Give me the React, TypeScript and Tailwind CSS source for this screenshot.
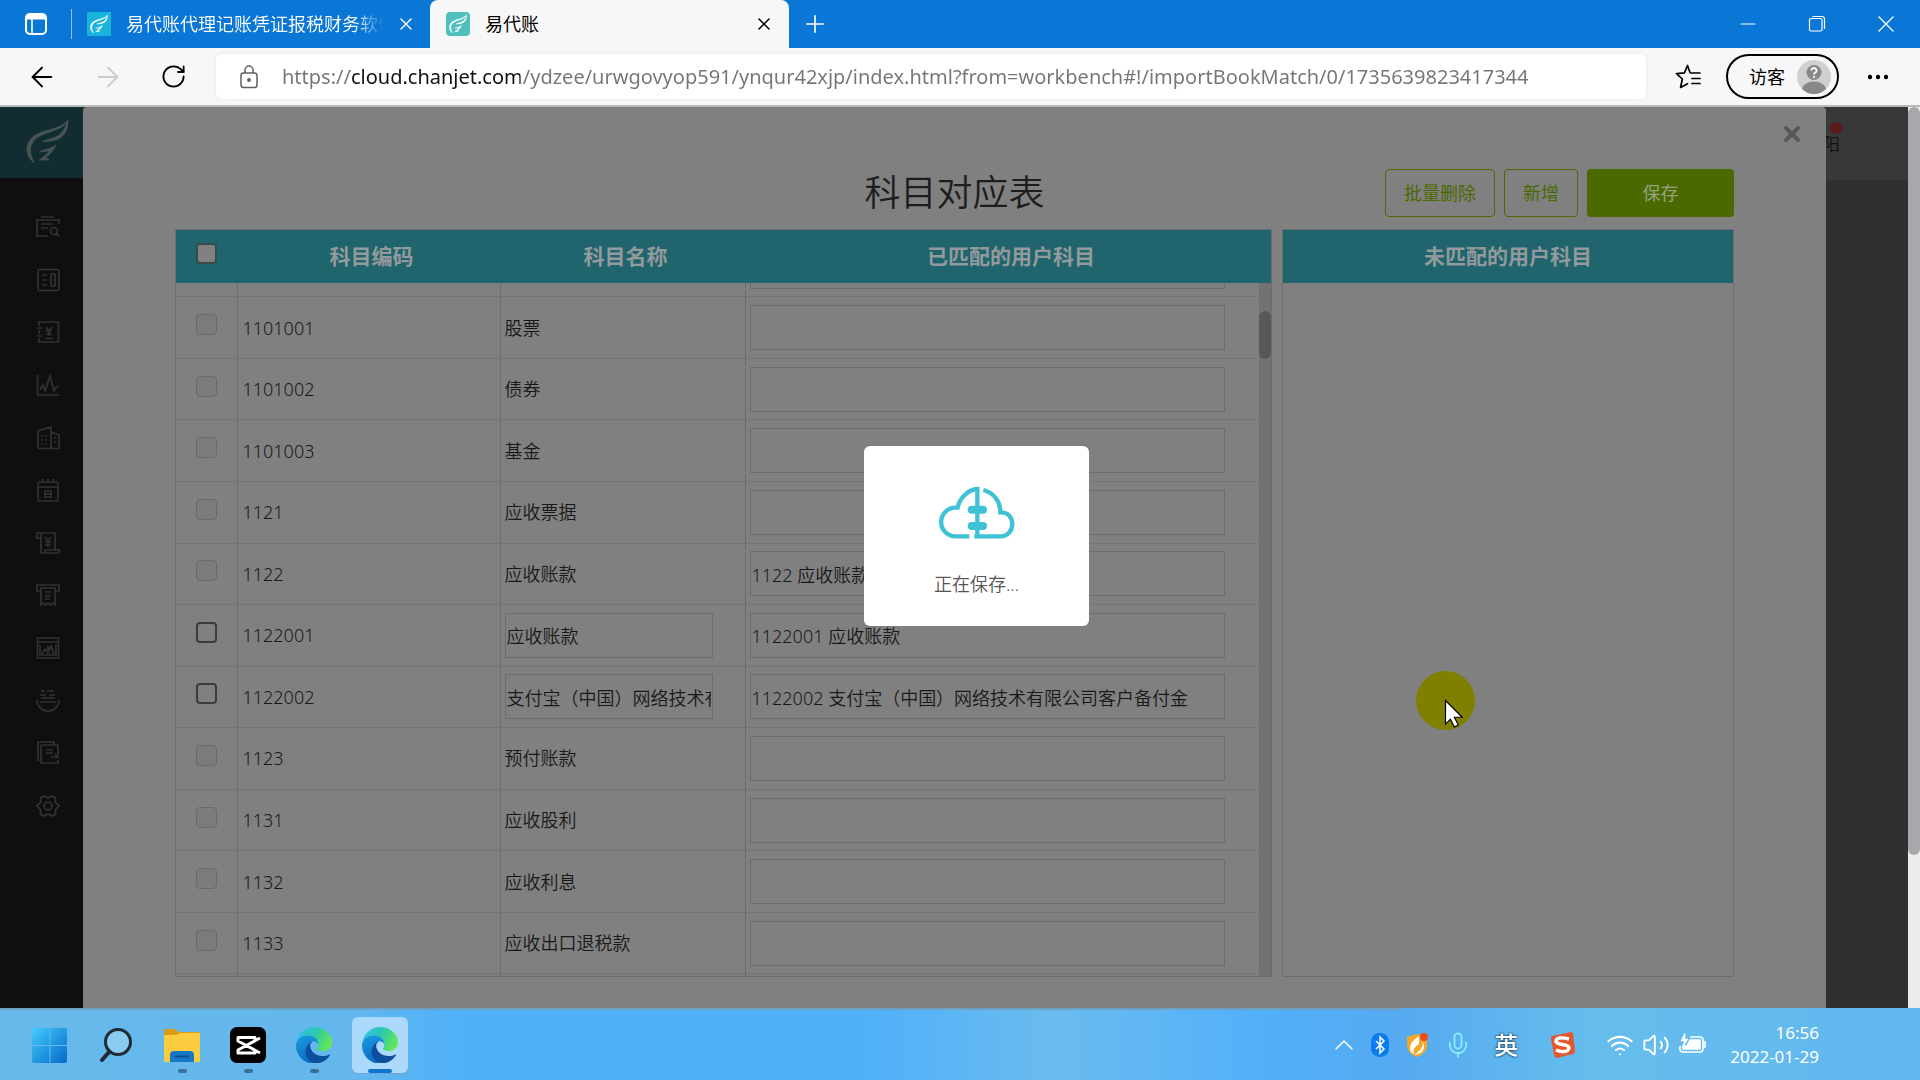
import type { ReactNode } from 'react'
import { ArrowLeft, ArrowRight, ChevronUp, Mic, Minus, Plus, RotateCw, Volume2, Wifi, X } from 'lucide-react'

type Row = { code: string; name: string; matched: string; editable?: boolean }

const rows: Row[] = [
  { code: '', name: '', matched: '' },
  { code: '1101001', name: '股票', matched: '' },
  { code: '1101002', name: '债券', matched: '' },
  { code: '1101003', name: '基金', matched: '' },
  { code: '1121', name: '应收票据', matched: '' },
  { code: '1122', name: '应收账款', matched: '1122 应收账款' },
  { code: '1122001', name: '应收账款', matched: '1122001 应收账款', editable: true },
  {
    code: '1122002',
    name: '支付宝（中国）网络技术有限公司客户备付金',
    matched: '1122002 支付宝（中国）网络技术有限公司客户备付金',
    editable: true,
  },
  { code: '1123', name: '预付账款', matched: '' },
  { code: '1131', name: '应收股利', matched: '' },
  { code: '1132', name: '应收利息', matched: '' },
  { code: '1133', name: '应收出口退税款', matched: '' },
  { code: '', name: '', matched: '' },
]

function Feather({ className }: { className: string }) {
  return (
    <svg className={className} viewBox="78 60 130 132" fill="currentColor" stroke="currentColor" strokeWidth="3">
      <path d="M205 62C196 84 160 92 130 104C96 118 76 146 103 192C76 172 72 138 96 114C124 88 182 92 205 62Z" />
      <path d="M205 62C206 90 196 110 172 120C156 126 140 125 128 126C150 118 172 114 184 102C196 90 200 78 205 62Z" />
      <path d="M168 138C160 156 148 168 136 176L148 182L118 183C130 174 144 164 150 154L118 158C138 150 154 148 168 138Z" />
    </svg>
  )
}

function TabsIcon() {
  return (
    <svg className="size-6" viewBox="0 0 24 24" fill="none" stroke="white" strokeWidth="2">
      <rect x="2" y="2" width="20" height="20" rx="4" />
      <path d="M2 5h20" strokeWidth="5" />
      <path d="M8 7v15" strokeWidth="1.6" />
    </svg>
  )
}

function EdgeIcon({ id }: { id: string }) {
  return (
    <svg className="size-9" viewBox="0 0 256 256">
      <defs>
        <linearGradient id={id + 'a'} x1="0" y1="0.3" x2="1" y2="0.6">
          <stop offset="0" stopColor="#35c1f1" />
          <stop offset="0.5" stopColor="#2cc7ad" />
          <stop offset="1" stopColor="#66eb4e" />
        </linearGradient>
        <linearGradient id={id + 'b'} x1="0" y1="0" x2="0.3" y2="1">
          <stop offset="0" stopColor="#1b9de2" />
          <stop offset="1" stopColor="#0a6cc4" />
        </linearGradient>
      </defs>
      <path fill="#0c4f9c" d="M235.7 195.5a93.7 93.7 0 0 1-10.6 4.7 101.9 101.9 0 0 1-35.9 6.4c-47.3 0-88.5-32.5-88.5-74.3a31.5 31.5 0 0 1 16.4-27.3c-42.8 1.8-53.8 46.4-53.8 72.5 0 74 68.1 81.4 82.8 81.4 7.9 0 19.8-2.3 27-4.6l1.3-.4a128.3 128.3 0 0 0 66.6-52.8 4 4 0 0 0-5.3-5.6z" />
      <path fill={`url(#${id}b)`} d="M105.7 246.4a79.2 79.2 0 0 1-22.7-21.3 80.7 80.7 0 0 1 29.5-120c3.2-1.5 8.5-4.1 15.6-4a32.4 32.4 0 0 1 25.7 13 31.9 31.9 0 0 1 6.3 18.7c0-.2 24.5-79.6-80-79.6-43.9 0-80 41.6-80 78.2a130.2 130.2 0 0 0 12.1 56 128 128 0 0 0 156.4 67 75.5 75.5 0 0 1-62.8-8z" />
      <path fill={`url(#${id}a)`} d="M152.3 148.9c-.9 1-3.4 2.5-3.4 5.6 0 2.6 1.7 5.2 4.8 7.3 14.3 10 41.4 8.6 41.5 8.6a59.6 59.6 0 0 0 30.3-8.3 61.4 61.4 0 0 0 30.4-52.9c.3-22.4-8-37.3-11.3-43.9C223.5 23.9 177.7 0 128 0A128 128 0 0 0 0 126.2c.5-36.5 36.8-66 80-66 3.5 0 23.5.3 42 10a72.6 72.6 0 0 1 30.9 29.3c6.1 10.6 7.2 24.1 7.2 29.5s-2.7 13.3-7.8 19.9z" />
    </svg>
  )
}

function TabBar() {
  return (
    <div className="flex h-12 shrink-0 items-center bg-[#0a76d6] text-white">
      <button aria-label="标签页操作" className="ml-6">
        <TabsIcon />
      </button>
      <div className="ml-[23px] h-[30px] w-px bg-[#8fc3ef]" />
      <div className="flex h-12 w-[358px] items-center pl-[15px]">
        <div className="flex size-6 shrink-0 items-center justify-center bg-[#19b4dc]">
          <Feather className="size-[18px] text-white" />
        </div>
        <span className="ml-[15px] w-[258px] overflow-hidden whitespace-nowrap bg-[linear-gradient(90deg,white_88%,transparent)] bg-clip-text text-lg text-transparent">
          易代账代理记账凭证报税财务软件
        </span>
        <button aria-label="关闭标签页" className="ml-3">
          <X className="size-5" strokeWidth={1.6} />
        </button>
      </div>
      <div className="flex h-12 w-[359px] items-center rounded-t-lg bg-[#f7f7f7] pl-4 pr-[15px] text-black">
        <div className="flex size-6 items-center justify-center rounded-sm bg-[#4fc0bd]">
          <Feather className="size-[18px] text-white" />
        </div>
        <span className="ml-[15px] flex-1 text-lg">易代账</span>
        <button aria-label="关闭标签页">
          <X className="size-5" strokeWidth={1.8} />
        </button>
      </div>
      <button aria-label="新建标签页" className="ml-3">
        <Plus className="size-7" strokeWidth={1.4} />
      </button>
      <div className="ml-auto flex items-center gap-[45px] pr-[22px]">
        <button aria-label="最小化">
          <Minus className="size-6" strokeWidth={1.2} />
        </button>
        <button aria-label="还原">
          <svg className="size-6" viewBox="0 0 24 24" fill="none" stroke="currentColor" strokeWidth="1.2">
            <rect x="4.5" y="6.5" width="12.5" height="12.5" rx="1.5" />
            <path d="M7.5 4.5h9.500a2.500 2.500 0 0 1 2.500 2.500v10" />
          </svg>
        </button>
        <button aria-label="关闭窗口">
          <svg className="size-6" viewBox="0 0 24 24" stroke="currentColor" strokeWidth="1.3">
            <path d="M4.500 4.500l15 15M19.500 4.500l-15 15" />
          </svg>
        </button>
      </div>
    </div>
  )
}

function Toolbar() {
  return (
    <div className="flex h-[59px] shrink-0 items-center border-b-2 border-[#b9b9b9] bg-[#f7f7f7] text-black">
      <button aria-label="后退" className="ml-[26px]">
        <ArrowLeft className="size-8" strokeWidth={1.5} />
      </button>
      <button aria-label="前进" className="ml-[34px] text-[#cccccc]" disabled>
        <ArrowRight className="size-8" strokeWidth={1.5} />
      </button>
      <button aria-label="刷新" className="ml-9">
        <RotateCw className="size-[27px]" strokeWidth={1.6} />
      </button>
      <div className="ml-[29px] flex h-[45px] flex-1 items-center rounded-md bg-white pl-6 shadow-[0_0_4px_#e8e8e8]">
        <svg className="h-6 w-[18px]" viewBox="0 0 18 24" fill="none" stroke="#5f5f5f" strokeWidth="1.5">
          <rect x="1" y="8" width="16" height="14.5" rx="2.5" />
          <path d="M5 8V5a4 4 0 0 1 8 0v3" />
          <circle cx="9" cy="15" r="1.2" fill="#5f5f5f" />
        </svg>
        <input
          aria-label="地址栏"
          readOnly
          className="ml-6 min-w-0 flex-1 bg-[linear-gradient(90deg,#757575_68px,#111111_68px,#111111_238px,#757575_238px)] bg-clip-text text-[20px] text-transparent outline-none"
          defaultValue="https://cloud.chanjet.com/ydzee/urwgovyop591/ynqur42xjp/index.html?from=workbench#!/importBookMatch/0/1735639823417344"
        />
      </div>
      <button aria-label="收藏夹" className="ml-[29px]">
        <svg className="size-[27px]" viewBox="0 0 27 27" fill="none" stroke="black" strokeWidth="1.7" strokeLinejoin="round" strokeLinecap="round">
          <path d="M15 9.500L12.500 2.500L9.500 9.800L1.500 10.600L7.300 16L5.600 24.500L12.500 20.700" />
          <path d="M16 10h9M17 15.500h8M17 20.500h8" />
        </svg>
      </button>
      <button className="ml-6 flex h-[45px] w-[113px] items-center rounded-full border-2 border-black pl-[21px] text-lg">
        访客
        <svg className="ml-3 size-[34px]" viewBox="0 0 34 34">
          <defs>
            <clipPath id="avatar">
              <circle cx="17" cy="17" r="17" />
            </clipPath>
          </defs>
          <g clipPath="url(#avatar)">
            <rect width="34" height="34" fill="#d2d0ce" />
            <circle cx="17" cy="12.5" r="7.5" fill="#8a8886" />
            <ellipse cx="17" cy="30" rx="12" ry="8.5" fill="#8a8886" />
          </g>
          <path d="M14.500 10.500a2.500 2.500 0 1 1 3.500 2.300q-1 .5-1 1.700" fill="none" stroke="white" strokeWidth="1.8" />
          <circle cx="17" cy="17" r="1.1" fill="white" />
        </svg>
      </button>
      <button aria-label="更多" className="ml-7 mr-[31px]">
        <svg className="h-2 w-[22px]" viewBox="0 0 22 8">
          <circle cx="3" cy="4" r="2.2" />
          <circle cx="11" cy="4" r="2.2" />
          <circle cx="19" cy="4" r="2.2" />
        </svg>
      </button>
    </div>
  )
}

const sideIcons: { label: string; art: ReactNode }[] = [
  {
    label: '查凭证',
    art: <path d="M5 2h13M1 10V5h22v4M1 5v16h11M5 9h12M5 13h7M21.500 16a3.500 3.500 0 1 1-7 0a3.500 3.500 0 1 1 7 0M20.500 18.500L23 21.500" />,
  },
  { label: '账簿', art: <path d="M3.500 1.500h18a1.500 1.500 0 0 1 1.500 1.500v18a1.500 1.500 0 0 1-1.500 1.500h-18a1.500 1.500 0 0 1-1.500-1.500v-18a1.500 1.500 0 0 1 1.500-1.500M6 7h5M6 12h5M6 17h5M15 6h4v12h-4z" /> },
  { label: '资金', art: <path d="M3 6V2h18.500a1 1 0 0 1 1 1v18a1 1 0 0 1-1 1H3v-4M3 10v4M1 8h5M1 16h5M10 7l3 4l3-4M13 11v5M10 11h6M10 14h6M9 18.500h8" /> },
  { label: '报表', art: <path d="M1.500 2v20H23M4 17l3-5l2 6l5-15l4 15l2-4h3" /> },
  { label: '资产', art: <path d="M2 22V5l13-4v21M2 22.500h21V9l-8-3M5 10h2M9 10h2M5 14h2M9 14h2M5 18h2M9 18h2M18 12h2M18 16h2" /> },
  { label: '结账', art: <path d="M3 4h18a1 1 0 0 1 1 1v17a1 1 0 0 1-1 1H3a1 1 0 0 1-1-1V5a1 1 0 0 1 1-1M2 9h20M7 1v4M12 1v4M17 1v4M9 13h6v6H9zM9 16h6" /> },
  { label: '工资', art: <path d="M5 7H1V2h18v17M5 2v20M5 22h17a2 2 0 0 0 1-3H9v3M9 6l3 4l3-4M12 10v6M9 11h6M9 14h6" /> },
  { label: '发票', art: <path d="M5 8H1V2h22v6h-4M5 5h14v17l-3-2l-2 2l-2-2l-2 2l-2-2l-3 2zM9 9h6M9 13h6M9 16h5" /> },
  { label: '税务', art: <path d="M1.500 2h21v20h-21zM1.500 6h21M4 9v10h16V9M6 18l3-5l3 3l3-6l3 8M12 10v8" /> },
  { label: '备份', art: <path d="M1 11a11 11 0 0 0 22 0M5 2h4M11 2h7M4 6h6M13 6h6M5 9h14M4 13h16" /> },
  { label: '单据', art: <path d="M5 19H2V1h16v3M5 4h17v10M5 4v18h17v-3M10 9h7M10 12h7M15 16h7l-3-3" /> },
  {
    label: '设置',
    art: (
      <>
        <path d="M8 2l4 2l4-2l3.500 2v4.500L23 12l-3.500 3.500V20L16 22l-4-2l-4 2l-3.500-2v-4.500L1 12l3.500-3.500V4z" />
        <circle cx="12" cy="12" r="4" />
      </>
    ),
  },
]

function Sidebar() {
  return (
    <nav className="w-[83px] shrink-0 bg-[#0f0f11]">
      <a href="#home" aria-label="首页" className="flex h-[71px] bg-[#112d31] pl-[26px] pt-[13px]">
        <Feather className="size-[43px] text-[#4a5354]" />
      </a>
      <div className="mt-[37px] flex h-[603px] flex-col justify-between pl-9">
        {sideIcons.map((icon) => (
          <a key={icon.label} href="#menu" aria-label={icon.label} className="size-6">
            <svg className="size-6" viewBox="0 0 24 24" fill="none" stroke="#323235" strokeWidth="1.7">
              {icon.art}
            </svg>
          </a>
        ))}
      </div>
    </nav>
  )
}

function Columns() {
  return (
    <colgroup>
      <col className="w-[61px]" />
      <col className="w-[263px]" />
      <col className="w-[245px]" />
      <col />
    </colgroup>
  )
}

function SubjectTable() {
  return (
    <section className="flex min-h-0 flex-col border border-[#6d6d6d]">
      <table className="w-full table-fixed bg-[#20646d] text-[21px] text-[#939a9b]">
        <Columns />
        <thead>
          <tr className="h-[53px]">
            <th className="pb-[6px]">
              <input type="checkbox" aria-label="全选" className="mx-auto block size-[21px] appearance-none rounded border-2 border-[#3b4a4c] bg-[#808080]" />
            </th>
            <th className="pl-[6px]">科目编码</th>
            <th className="pl-[6px]">科目名称</th>
            <th className="pl-[6px]">已匹配的用户科目</th>
          </tr>
        </thead>
      </table>
      <div className="flex min-h-0 flex-1 overflow-hidden">
        <div className="min-w-0 flex-1">
          <table className="-mt-[47px] h-[800px] w-full table-fixed text-lg font-[350] text-[#181818]">
            <Columns />
            <tbody>
              {rows.map((row, i) => (
                <tr key={i} className="border-b border-[#757575]">
                  <td className="border-r border-[#6d6d6d] pb-[6px]">
                    <input
                      type="checkbox"
                      aria-label={'选择 ' + row.code}
                      disabled={!row.editable}
                      className="mx-auto block size-[21px] appearance-none rounded border-2 border-[#3c3c3c] disabled:border disabled:border-[#6a6a6a] disabled:bg-[#7b7b7b]"
                    />
                  </td>
                  <td className="border-r border-[#6d6d6d] pl-[5px]">{row.code}</td>
                  <td className="border-r border-[#6d6d6d] pl-1 pr-8">
                    {row.editable ? (
                      <input aria-label="科目名称" defaultValue={row.name} className="block h-[45px] w-full border border-[#6d6d6d] px-px outline-none" />
                    ) : (
                      row.name
                    )}
                  </td>
                  <td className="pl-1 pr-[34px]">
                    <input aria-label="已匹配的用户科目" defaultValue={row.matched} className="block h-[45px] w-full border border-[#6d6d6d] px-px outline-none" />
                  </td>
                </tr>
              ))}
            </tbody>
          </table>
        </div>
        <div className="w-3 bg-[#727272] pt-7">
          <div className="h-12 rounded-full bg-[#585858]" />
        </div>
      </div>
    </section>
  )
}

function MatchDialog() {
  return (
    <main className="flex min-w-0 flex-1 flex-col rounded-t bg-[#808080] px-[92px] pb-[31px]">
      <div className="-mr-[72px] flex h-[62px] items-center justify-end">
        <button aria-label="关闭" className="mb-2 mr-[2px] text-[#575757]">
          <X className="size-6" strokeWidth={4} />
        </button>
      </div>
      <div className="grid h-12 grid-cols-[1fr_auto_1fr] items-center">
        <h1 className="col-start-2 text-4xl font-[350] text-[#1d1d1d]">科目对应表</h1>
        <div className="flex justify-end gap-[9px] text-lg">
          <button className="h-12 rounded border border-[#4a6a00] px-[18px] text-[#4a6a00]">批量删除</button>
          <button className="h-12 rounded border border-[#4a6a00] px-[18px] text-[#4a6a00]">新增</button>
          <button className="h-12 w-[147px] rounded bg-[#4a6a00] text-[#97a380]">保存</button>
        </div>
      </div>
      <div className="mt-3 grid min-h-0 flex-1 grid-cols-[1097fr_452fr] gap-[10px]">
        <SubjectTable />
        <section className="flex flex-col border border-[#6d6d6d]">
          <h2 className="flex h-[53px] items-center justify-center bg-[#20646d] text-[21px] font-bold text-[#939a9b]">未匹配的用户科目</h2>
        </section>
      </div>
    </main>
  )
}

function SavingPopup() {
  return (
    <div role="status" className="absolute left-[45%] top-[446px] flex h-[180px] w-[225px] flex-col items-center rounded-md bg-white pt-10">
      <svg className="h-[54px] w-[76px]" viewBox="0 0 228 162" fill="none" stroke="#3fc1d6" strokeWidth="13">
        <path d="M91 151H50a42 42 0 0 1-1-86h7C62 34 90 10 115 9V151" />
        <path d="M133 12c32 8 52 36 51 67c22-1 36 14 36 35c0 22-16 37-36 37H106" />
        <path d="M98 71h34M98 120h34" strokeWidth="24" strokeLinecap="round" />
      </svg>
      <p className="mt-[30px] text-lg font-[350] text-[#555555]">正在保存...</p>
    </div>
  )
}

function Pointer() {
  return (
    <svg className="pointer-events-none absolute left-[1416px] top-[671px] size-[59px]" viewBox="0 0 60 60">
      <circle cx="30" cy="30" r="30" fill="#808000" />
      <path d="M30 30v24l5-5l4 8l4-2l-4-8h8z" fill="white" stroke="black" strokeWidth="1.2" />
    </svg>
  )
}

function TaskButton({ label, running, active, children }: { label: string; running?: boolean; active?: boolean; children: ReactNode }) {
  return (
    <button
      aria-label={label}
      className={'flex h-14 w-14 flex-col items-center pt-[10px] ' + (active ? 'rounded-md bg-[#aad9fb] shadow-[0_1px_1px_#6fa9d4]' : '')}
    >
      {children}
      {active && <span className="mt-[6px] h-1 w-6 rounded-full bg-[#0f74cf]" />}
      {running && <span className="mt-[6px] h-1 w-[9px] rounded-full bg-[#3b7199]" />}
    </button>
  )
}

function Taskbar() {
  return (
    <footer className="h-[72px] shrink-0 bg-[linear-gradient(90deg,#67b9ea_0%,#63b7ec_18%,#50b0f9_24%,#50b0f9_45%,#6abcee_55%,#52affa_66%,#55aaf0_73%,#65bdec_83%,#61b7f0_100%)]">
      <div className="h-[2px] w-[73%] bg-[#6ea0c2]" />
      <div className="flex h-[70px] items-center pl-[22px] pr-[101px]">
        <div className="flex gap-[10px]">
          <TaskButton label="开始">
            <svg className="size-9" viewBox="0 0 36 36">
              <defs>
                <linearGradient id="win" x1="0" y1="0" x2="1" y2="1">
                  <stop offset="0" stopColor="#43cbfb" />
                  <stop offset="1" stopColor="#0569cb" />
                </linearGradient>
              </defs>
              <path fill="url(#win)" d="M2 1h15.500v17H0V3a2 2 0 0 1 2-2zM18.500 1H33a2 2 0 0 1 2 2v15H18.500zM0 19h17.500v17H2a2 2 0 0 1-2-2zM18.500 19H35v15a2 2 0 0 1-2 2H18.500z" />
            </svg>
          </TaskButton>
          <TaskButton label="搜索">
            <svg className="size-9" viewBox="0 0 36 36" fill="none" stroke="#1f2a33">
              <circle cx="20" cy="15" r="12.5" strokeWidth="3" fill="#8ccbf0" />
              <path d="M11.500 24.500L4 33" strokeWidth="4" strokeLinecap="round" />
            </svg>
          </TaskButton>
          <TaskButton label="文件资源管理器" running>
            <svg className="size-9" viewBox="0 0 36 36">
              <path d="M0 4a2 2 0 0 1 2-2h9l4 3h19a2 2 0 0 1 2 2v10H0z" fill="#dc9a15" />
              <path d="M0 8h12l4-2h20v28a1 1 0 0 1-1 1H1a1 1 0 0 1-1-1z" fill="#fbcc3d" />
              <path d="M6 35V28a4 4 0 0 1 4-4h16a4 4 0 0 1 4 4v7z" fill="#1578c4" />
              <path d="M11 29.500h14" stroke="#0c4f8c" strokeWidth="2" />
            </svg>
          </TaskButton>
          <TaskButton label="剪映" running>
            <svg className="size-9" viewBox="0 0 36 36" fill="none">
              <rect width="36" height="36" rx="7" fill="black" />
              <path d="M30 11L8 23v3h17v-3M30 26L8 14v-3.500h17V14" stroke="white" strokeWidth="3" strokeLinejoin="round" />
            </svg>
          </TaskButton>
          <TaskButton label="Microsoft Edge" running>
            <EdgeIcon id="e1" />
          </TaskButton>
          <TaskButton label="易代账" active>
            <EdgeIcon id="e2" />
          </TaskButton>
        </div>
        <div className="ml-auto flex items-center text-white">
          <button aria-label="显示隐藏的图标">
            <ChevronUp className="size-8" strokeWidth={1.1} />
          </button>
          <svg className="ml-[11px] h-6 w-[18px]" viewBox="0 0 18 24" fill="none">
            <rect width="18" height="24" rx="8.5" fill="#0a7cf0" />
            <path d="M5 8l8 8l-4 4V4l4 4l-8 8" stroke="white" strokeWidth="1.5" />
          </svg>
          <svg className="ml-[17px] h-6 w-[22px]" viewBox="0 0 22 24">
            <path d="M11 1l10 3v8q0 8-10 12q-10-4-10-12V4z" fill="#f7a823" />
            <path d="M13 3q-9 6-9 12q0 4 4 6q-2-6 5-10zM17 8q1 8-9 14q10-1 10-9z" fill="white" />
            <circle cx="18" cy="4" r="4" fill="#ee4b16" />
          </svg>
          <Mic className="ml-4 size-7 text-[#8af0ff]" strokeWidth={1.5} />
          <span className="ml-[22px] text-2xl font-medium [text-shadow:0_0_2px_#12314a,0_0_2px_#12314a]">英</span>
          <svg className="ml-[33px] h-7 w-6" viewBox="0 0 24 28">
            <path d="M1 5L20 1q2 0 2 2l2 17q0 2-2 3L6 27q-2 0-3-3L0 8q0-2 1-3z" fill="#e2582f" />
            <path d="M18 8q-12-3-13 2c0 5 13 2 13 7c-1 5-9 4-13 2" fill="none" stroke="white" strokeWidth="3.5" />
          </svg>
          <div className="ml-[31px] flex items-center gap-2">
            <Wifi className="size-7" strokeWidth={1.8} />
            <Volume2 className="size-7" strokeWidth={1.6} />
            <svg className="size-7" viewBox="0 0 28 28" fill="none" stroke="white" strokeWidth="1.6">
              <path d="M12 6h10a3 3 0 0 1 3 3v9a3 3 0 0 1-3 3H5a3 3 0 0 1-3-3v-3" />
              <path d="M12 9h10v9H5v-3h4z" fill="white" />
              <path d="M25 11h2v5h-2" />
              <path d="M7 2L3 10h3l-1 6l5-8H7z" fill="white" strokeWidth="0.5" />
            </svg>
          </div>
          <time className="ml-6 text-right text-[17px] leading-6">
            16:56
            <br />
            2022-01-29
          </time>
        </div>
      </div>
    </footer>
  )
}

export default function App() {
  return (
    <div className="relative flex h-screen flex-col overflow-hidden bg-[#303030] font-['Noto_Sans','Noto_Sans_CJK_SC',sans-serif]">
      <TabBar />
      <Toolbar />
      <div className="flex min-h-0 flex-1">
        <Sidebar />
        <MatchDialog />
        <aside className="w-[82px] shrink-0">
          <div className="h-[73px] overflow-hidden bg-[#383838] pt-[15px]">
            <span className="ml-1 block size-3 rounded-full bg-[#5c1a1a]" />
            <span className="-ml-1 block text-lg leading-5 font-[350] text-[#111111]">阳</span>
          </div>
        </aside>
        <div className="w-3 shrink-0 bg-[#ececec]">
          <div className="h-[83%] rounded-full bg-[#a6a8ab]" />
        </div>
      </div>
      <SavingPopup />
      <Pointer />
      <Taskbar />
    </div>
  )
}
